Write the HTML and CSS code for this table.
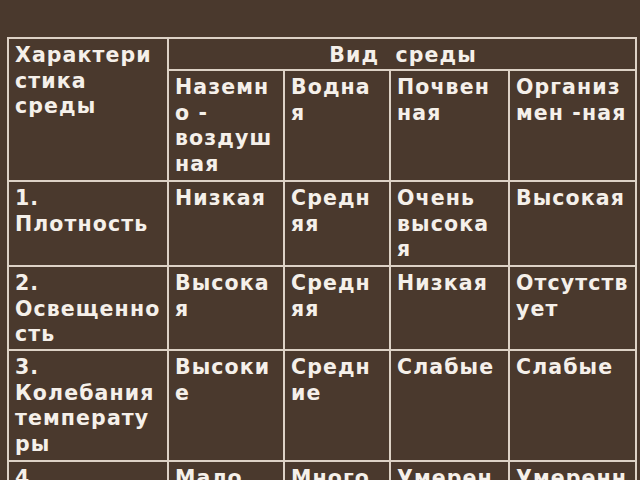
FILE: index.html
```html
<!DOCTYPE html>
<html lang="ru">
<head>
<meta charset="utf-8">
<title>Характеристика сред</title>
<link rel="stylesheet" href="styles.css">
</head>
<body>
<table class="grid">
  <colgroup>
    <col class="c1"><col class="c2"><col class="c3"><col class="c4"><col class="c5">
  </colgroup>
  <tr class="r-h1">
    <td rowspan="2">Характери<br>стика<br>среды</td>
    <td colspan="4" class="center">Вид&nbsp; среды</td>
  </tr>
  <tr class="r-h2">
    <td>Наземн<br>о -<br>воздуш<br>ная</td>
    <td>Водна<br>я</td>
    <td>Почвен<br>ная</td>
    <td>Организ<br>мен -ная</td>
  </tr>
  <tr class="r-1">
    <td>1.<br>Плотность</td>
    <td>Низкая</td>
    <td>Средн<br>яя</td>
    <td>Очень<br>высока<br>я</td>
    <td>Высокая</td>
  </tr>
  <tr class="r-2">
    <td>2.<br>Освещенно<br>сть</td>
    <td>Высока<br>я</td>
    <td>Средн<br>яя</td>
    <td>Низкая</td>
    <td>Отсутств<br>ует</td>
  </tr>
  <tr class="r-3">
    <td>3.<br>Колебания<br>температу<br>ры</td>
    <td>Высоки<br>е</td>
    <td>Средн<br>ие</td>
    <td>Слабые</td>
    <td>Слабые</td>
  </tr>
  <tr class="r-4">
    <td>4.<br>Содержа<br>ние<br>кислорода</td>
    <td>Мало</td>
    <td>Много</td>
    <td>Умерен<br>ное</td>
    <td>Умеренн<br>ое</td>
  </tr>
</table>
</body>
</html>
```

FILE: styles.css
```css
html, body {
  margin: 0;
  padding: 0;
  background: #4a392d;
  overflow: hidden;
}

body {
  width: 640px;
  height: 480px;
  padding: 37px 0 0 7px;
  box-sizing: border-box;
}

.grid {
  border-collapse: collapse;
  table-layout: fixed;
  width: 628px;
  font-family: "DejaVu Sans", Verdana, sans-serif;
  font-weight: bold;
  font-size: 20.5px;
  line-height: 25.5px;
  letter-spacing: 1.1px;
  color: #f5f0ea;
}

.c1 { width: 160px; }
.c2 { width: 116px; }
.c3 { width: 106px; }
.c4 { width: 119px; }
.c5 { width: 127px; }

.grid td {
  border: 2px solid #ddd2c6;
  vertical-align: top;
  padding: 4px 4px 0 6px;
  white-space: nowrap;
  overflow: hidden;
}

.grid td.center {
  text-align: center;
}

.r-h1 { height: 32px; }
.r-h2 { height: 111px; }
.r-1 { height: 85px; }
.r-2 { height: 84px; }
.r-3 { height: 111px; }
.r-4 { height: 111px; }
```
